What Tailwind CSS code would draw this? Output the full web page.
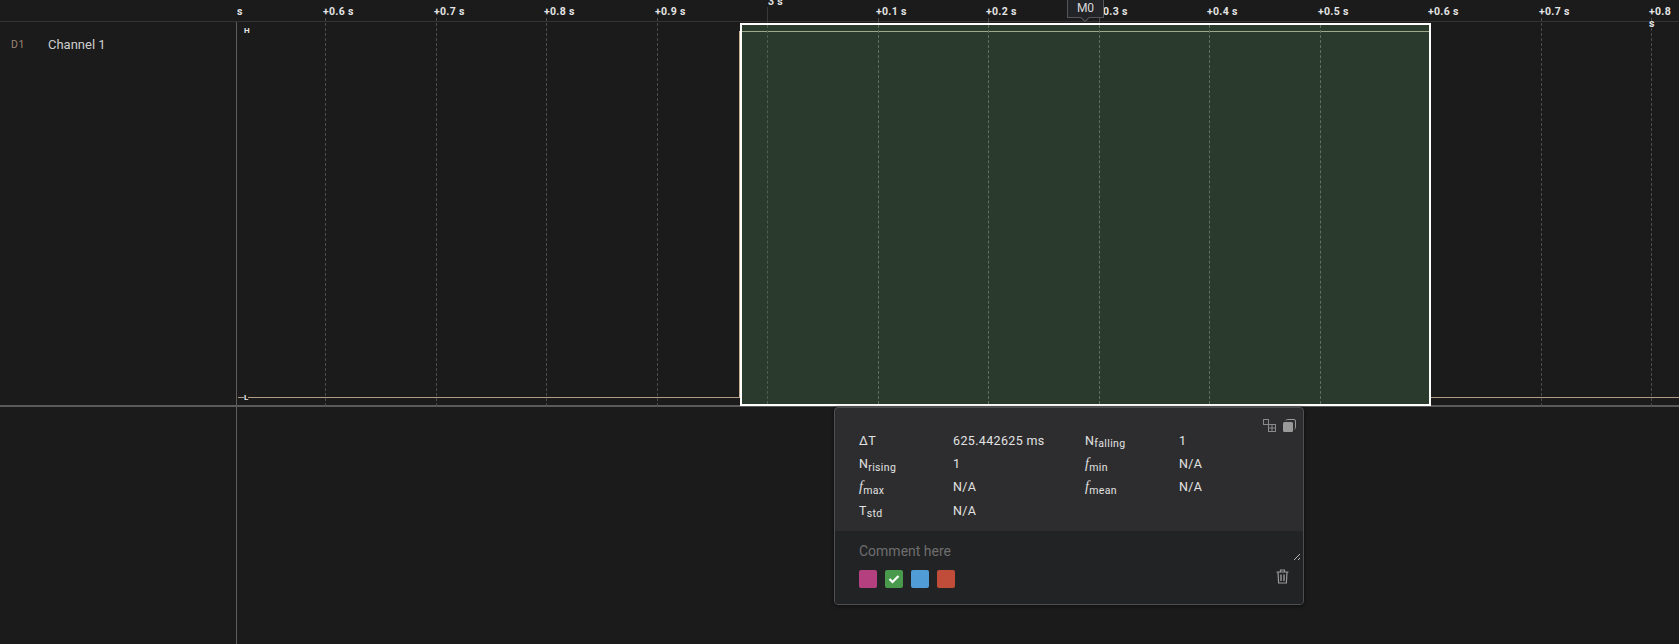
<!doctype html>
<html>
<head>
<meta charset="utf-8">
<script src="https://cdn.jsdelivr.net/npm/@tailwindcss/browser@4"></script>
</head>
<body class="bg-[#1b1b1b] overflow-hidden font-['Roboto',sans-serif]">
<div class="relative w-[1679px] h-[644px] overflow-hidden flex flex-col text-[#e6e6e6]">

  <div class="h-[22px] shrink-0 border-b border-[#333338]"></div>

  <div class="h-[385px] shrink-0 flex border-b-2 border-[#5a5a5a]">
    <div class="w-[237px] shrink-0 border-r border-[#5e5e5e] flex items-start pt-[14px] pl-[11px] gap-[23px]">
      <span class="text-[10.5px] leading-[18px] tracking-[0.5px] text-[#9c8474] w-[14px]">D1</span>
      <span class="text-[13px] leading-[18px] text-[#cfcfcf]">Channel 1</span>
    </div>
    <div class="flex-1"></div>
  </div>

  <div class="flex-1 flex">
    <div class="w-[237px] shrink-0 border-r border-[#5e5e5e]"></div>
  </div>

  <!-- low level trace -->
  <div class="absolute left-[238px] right-0 top-[397px] h-px bg-[#b39c84]"></div>
  <span class="absolute left-[244px] top-[26px] text-[8px] leading-[10px] font-bold text-[#e8e8e8]">H</span>
  <span class="absolute left-[244px] top-[393px] text-[8px] leading-[10px] font-bold text-[#e8e8e8] bg-[#1b1b1b]">L</span>

  <!-- grid lines -->
  <div class="absolute left-[325px] top-[18px] h-[388px] border-l border-dashed border-[#4b4b4b]"></div>
  <div class="absolute left-[436px] top-[18px] h-[388px] border-l border-dashed border-[#4b4b4b]"></div>
  <div class="absolute left-[546px] top-[18px] h-[388px] border-l border-dashed border-[#4b4b4b]"></div>
  <div class="absolute left-[657px] top-[18px] h-[388px] border-l border-dashed border-[#4b4b4b]"></div>
  <div class="absolute left-[1541px] top-[18px] h-[388px] border-l border-dashed border-[#4b4b4b]"></div>
  <div class="absolute left-[1651px] top-[18px] h-[388px] border-l border-dashed border-[#4b4b4b]"></div>

  <!-- selection -->
  <div class="absolute left-[740px] top-[23px] w-[691px] h-[383px] border-2 border-white bg-[#2a3b2d]"></div>
  <div class="absolute left-[739px] top-[31px] h-[367px] w-px bg-[#c9ad96]"></div>
  <div class="absolute left-[742px] top-[31px] w-[687px] h-px bg-[#9ea88c]"></div>
  <div class="absolute left-[767px] top-[7px] h-[16px] w-px bg-[#3a3a3a]"></div>
  <div class="absolute left-[767px] top-[25px] h-[379px] border-l border-dashed border-[#4d5f50]"></div>
  <div class="absolute left-[878px] top-[18px] h-[5px] w-px bg-[#4b4b4b]"></div>
  <div class="absolute left-[878px] top-[25px] h-[379px] border-l border-dashed border-[#5f7062]"></div>
  <div class="absolute left-[988px] top-[18px] h-[5px] w-px bg-[#4b4b4b]"></div>
  <div class="absolute left-[988px] top-[25px] h-[379px] border-l border-dashed border-[#5f7062]"></div>
  <div class="absolute left-[1099px] top-[18px] h-[5px] w-px bg-[#4b4b4b]"></div>
  <div class="absolute left-[1099px] top-[25px] h-[379px] border-l border-dashed border-[#5f7062]"></div>
  <div class="absolute left-[1209px] top-[25px] h-[379px] border-l border-dashed border-[#5f7062]"></div>
  <div class="absolute left-[1320px] top-[25px] h-[379px] border-l border-dashed border-[#5f7062]"></div>

  <!-- axis labels -->
  <span class="absolute left-[237px] top-[6px] text-[10.5px] leading-3 font-bold text-[#e4e4e4]">s</span>
  <span class="absolute left-[323px] top-[6px] text-[10.5px] leading-3 font-bold tracking-[0.3px] text-[#e4e4e4]">+0.6 s</span>
  <span class="absolute left-[434px] top-[6px] text-[10.5px] leading-3 font-bold tracking-[0.3px] text-[#e4e4e4]">+0.7 s</span>
  <span class="absolute left-[544px] top-[6px] text-[10.5px] leading-3 font-bold tracking-[0.3px] text-[#e4e4e4]">+0.8 s</span>
  <span class="absolute left-[655px] top-[6px] text-[10.5px] leading-3 font-bold tracking-[0.3px] text-[#e4e4e4]">+0.9 s</span>
  <span class="absolute left-[768px] top-[-4px] text-[10.5px] leading-3 font-bold tracking-[0.3px] text-[#e4e4e4]">3 s</span>
  <span class="absolute left-[876px] top-[6px] text-[10.5px] leading-3 font-bold tracking-[0.3px] text-[#e4e4e4]">+0.1 s</span>
  <span class="absolute left-[986px] top-[6px] text-[10.5px] leading-3 font-bold tracking-[0.3px] text-[#e4e4e4]">+0.2 s</span>
  <span class="absolute left-[1097px] top-[6px] text-[10.5px] leading-3 font-bold tracking-[0.3px] text-[#e4e4e4]">+0.3 s</span>
  <span class="absolute left-[1207px] top-[6px] text-[10.5px] leading-3 font-bold tracking-[0.3px] text-[#e4e4e4]">+0.4 s</span>
  <span class="absolute left-[1318px] top-[6px] text-[10.5px] leading-3 font-bold tracking-[0.3px] text-[#e4e4e4]">+0.5 s</span>
  <span class="absolute left-[1428px] top-[6px] text-[10.5px] leading-3 font-bold tracking-[0.3px] text-[#e4e4e4]">+0.6 s</span>
  <span class="absolute left-[1539px] top-[6px] text-[10.5px] leading-3 font-bold tracking-[0.3px] text-[#e4e4e4]">+0.7 s</span>
  <span class="absolute left-[1649px] top-[6px] text-[10.5px] leading-3 font-bold tracking-[0.3px] text-[#e4e4e4]">+0.8 s</span>

  <!-- M0 marker -->
  <div class="absolute left-[1067px] top-[-3px] w-[37px] h-[21px] bg-[#232428] border border-[#55565a] flex items-center justify-center text-[12px] leading-none text-[#d8d8d8]">M0</div>
  <div class="absolute left-[1082px] top-[15px] w-[6px] h-[6px] rotate-45 bg-[#232428] border-r border-b border-[#55565a]"></div>

  <!-- measurement popup -->
  <div class="absolute left-[834px] top-[407px] w-[470px] h-[198px] rounded-[4px] border border-[#4f4f52] overflow-hidden bg-[#2d2d2f] flex flex-col shadow-[0_1px_4px_rgba(0,0,0,0.5)]">
    <div class="h-[123px] shrink-0 relative pl-[24px] pt-[21px]">
      <div class="absolute right-[7px] top-[11px] flex gap-[7px]">
        <svg width="13" height="13" viewBox="0 0 13 13" fill="none" stroke="#8a8a8a" stroke-width="1"><rect x="0.5" y="0.5" width="5" height="5"/><rect x="5.5" y="5.5" width="7" height="7"/><path d="M9 5.5V12.5M5.5 9H12.5"/></svg>
        <svg width="13" height="13" viewBox="0 0 13 13" fill="#9a9a9a"><rect x="0" y="3" width="10" height="10" rx="1.5"/><path d="M3 1.5A1.5 1.5 0 0 1 4.5 0.5H11A1.5 1.5 0 0 1 12.5 2V8.5A1.5 1.5 0 0 1 11.5 10" fill="none" stroke="#9a9a9a"/></svg>
      </div>
      <div class="grid grid-cols-[94px_132px_94px_80px] auto-rows-[23.4px] items-center text-[12.5px] leading-[16px] tracking-[0.35px] text-[#e2e2e2]">
        <span>ΔT</span><span>625.442625 ms</span><span>N<sub class="text-[10.5px]">falling</sub></span><span>1</span>
        <span>N<sub class="text-[10.5px]">rising</sub></span><span>1</span><span><i class="font-['Liberation_Serif'] text-[14px]">f</i><sub class="text-[10.5px]">min</sub></span><span>N/A</span>
        <span><i class="font-['Liberation_Serif'] text-[14px]">f</i><sub class="text-[10.5px]">max</sub></span><span>N/A</span><span><i class="font-['Liberation_Serif'] text-[14px]">f</i><sub class="text-[10.5px]">mean</sub></span><span>N/A</span>
        <span>T<sub class="text-[10.5px]">std</sub></span><span>N/A</span>
      </div>
    </div>
    <div class="flex-1 relative bg-[#222325] pl-[24px] pt-[11px]">
      <div class="text-[14px] leading-[18px] text-[#6e6e6e]">Comment here</div>
      <div class="flex gap-2 mt-[10px]">
        <span class="w-[18px] h-[18px] rounded-[2px] bg-[#b5407f]"></span>
        <span class="w-[18px] h-[18px] rounded-[2px] bg-[#4a9a4e] flex items-center justify-center">
          <svg width="12" height="10" viewBox="0 0 12 10" fill="none" stroke="#fff" stroke-width="2.2"><path d="M1.5 5L4.5 8L10.5 2"/></svg>
        </span>
        <span class="w-[18px] h-[18px] rounded-[2px] bg-[#509cd7]"></span>
        <span class="w-[18px] h-[18px] rounded-[2px] bg-[#c04c3a]"></span>
      </div>
      <svg class="absolute right-[2px] top-[22px]" width="8" height="8" viewBox="0 0 8 8" fill="none" stroke="#b8b8b8" stroke-width="1"><path d="M1 7L7 1M5 7L7 5"/></svg>
      <svg class="absolute right-[14px] top-[38px]" width="13" height="15" viewBox="0 0 13 15" fill="none" stroke="#9a9a9a" stroke-width="1.2"><path d="M0.5 3H12.5M4.5 3V1H8.5V3M2 3L2.6 14H10.4L11 3"/><path d="M5 5.5V12M8 5.5V12" stroke-width="1.4"/></svg>
    </div>
  </div>
</div>
</body>
</html>
